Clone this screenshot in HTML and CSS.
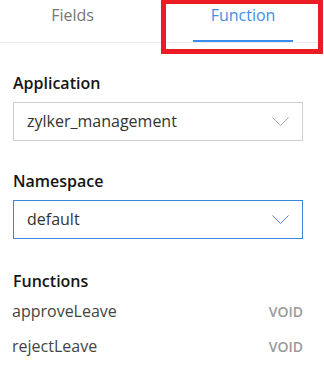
FILE: index.html
```html
<!DOCTYPE html>
<html lang="en">
<head>
    <meta charset="UTF-8">
    <meta name="viewport" content="width=device-width, initial-scale=1.0">
    <title>Function</title>
    <link rel="stylesheet" href="styles.css">
</head>
<body>
    <div class="tabs">
        <div class="tab">Fields</div>
        <div class="tab active">Function</div>
        <div class="highlight"></div>
    </div>

    <div class="panel">
        <div class="field">
            <label class="field-label">Application</label>
            <div class="select">
                <span>zylker_management</span>
                <svg class="chevron" width="17" height="9" viewBox="0 0 17 9"><path d="M0.5 0.5 L8.5 8.5 L16.5 0.5" fill="none" stroke="#a8a8a8" stroke-width="1"/></svg>
            </div>
        </div>

        <div class="field">
            <label class="field-label">Namespace</label>
            <div class="select focused">
                <span>default</span>
                <svg class="chevron" width="17" height="9" viewBox="0 0 17 9"><path d="M0.5 0.5 L8.5 8.5 L16.5 0.5" fill="none" stroke="#5b7fd8" stroke-width="1"/></svg>
            </div>
        </div>

        <div class="functions">
            <label class="field-label">Functions</label>
            <div class="fn-row"><span>approveLeave</span><span class="fn-type">VOID</span></div>
            <div class="fn-row"><span>rejectLeave</span><span class="fn-type">VOID</span></div>
        </div>
    </div>
</body>
</html>
```

FILE: styles.css
```css
body { margin: 0; background: #fff; font-family: "Open Sans", Lato, sans-serif; color: #333; }

.tabs { position: relative; display: flex; height: 42px; border-bottom: 1px solid #ececec; }
.tab { padding-top: 5px; line-height: 20px; font-size: 16px; color: #777; text-align: center; }
.tab:first-child { width: 145px; }
.tab.active { width: 100px; margin-left: 48px; height: 35px; color: #3f8fe6; border-bottom: 2px solid #3b8ef0; }
.highlight { position: absolute; left: 161px; top: -1px; width: 152px; height: 45px; border: 5px solid #eb1c24; }

.panel { padding: 30px 21px 0 13px; }
.field { margin-bottom: 30px; }
.field-label { display: block; font-size: 16px; line-height: 20px; font-weight: 600; color: #151515; margin-bottom: 9px; }

.select { display: flex; align-items: center; justify-content: space-between; height: 39px; box-sizing: border-box; padding: 0 13px; border: 1px solid #cfcfcf; font-size: 16px; line-height: 37px; color: #333; }
.select.focused { border-color: #3a86d8; }
.chevron { display: block; margin-top: -1px; }

.functions { margin-top: 32px; }
.functions .field-label { margin-bottom: 3px; }
.fn-row { display: flex; justify-content: space-between; align-items: baseline; font-size: 16px; line-height: 35px; color: #444; margin-left: -1px; }
.fn-type { font-size: 14px; font-weight: 600; color: #9a9a9a; }
```
